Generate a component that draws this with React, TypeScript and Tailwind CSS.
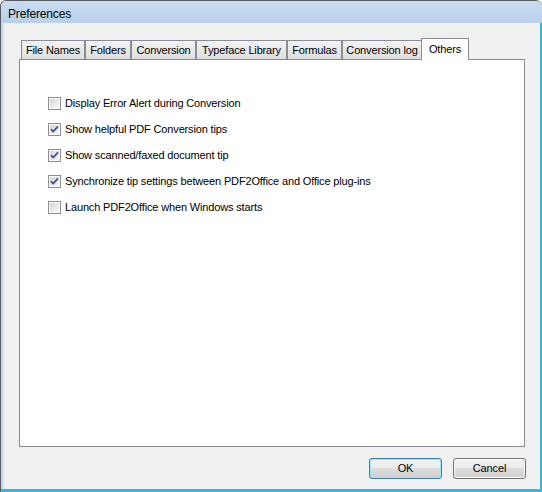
import React from "react";

const tabs = [
  { label: "File Names", w: "w-[64px]" },
  { label: "Folders", w: "w-[46px]" },
  { label: "Conversion", w: "w-[65px]" },
  { label: "Typeface Library", w: "w-[91px]" },
  { label: "Formulas", w: "w-[55px]" },
  { label: "Conversion log", w: "w-[80px]" },
];

const options = [
  { label: "Display Error Alert during Conversion", checked: false },
  { label: "Show helpful PDF Conversion tips", checked: true },
  { label: "Show scanned/faxed document tip", checked: true },
  { label: "Synchronize tip settings between PDF2Office and Office plug-ins", checked: true },
  { label: "Launch PDF2Office when Windows starts", checked: false },
];

function CheckBox({ checked }: { checked: boolean }) {
  return (
    <svg width="13" height="13" viewBox="0 0 13 13" className="shrink-0">
      <defs>
        <linearGradient id="cbfill" x1="0" y1="0" x2="1" y2="1">
          <stop offset="0" stopColor="#d6d6d6" />
          <stop offset="1" stopColor="#f8f8f8" />
        </linearGradient>
      </defs>
      <rect x="0.5" y="0.5" width="12" height="12" fill="#ffffff" stroke="#8e8f8f" />
      <rect x="2" y="2" width="9" height="9" fill="url(#cbfill)" />
      {checked && (
        <path
          d="M3 6.2 L5.2 8.6 L10 3.4"
          fill="none"
          stroke="#3d5aa0"
          strokeWidth="1.8"
          strokeLinejoin="round"
        />
      )}
    </svg>
  );
}

function Button({ label, focused }: { label: string; focused?: boolean }) {
  return (
    <div
      className={
        "flex h-[21px] w-[73px] items-center justify-center rounded-[3px] border bg-[linear-gradient(#f2f2f2_0%,#ebebeb_50%,#dddddd_50%,#cfcfcf_100%)] text-[11px] text-black " +
        (focused
          ? "border-[#3c7fb1] shadow-[inset_0_0_0_1px_#9fe3fa]"
          : "border-[#707070] shadow-[inset_0_0_0_1px_#fbfbfb]")
      }
    >
      {label}
    </div>
  );
}

export default function App() {
  return (
    <div
      className="flex h-[492px] w-[542px] flex-col overflow-hidden rounded-t-[6px] border-l border-t border-[#555a60] bg-[#c1d7ee] tracking-[-0.15px] text-black"
      style={{ fontFamily: '"Liberation Sans", Arial, sans-serif' }}
    >
      {/* Title bar */}
      <div className="flex h-[22px] shrink-0 items-center bg-gradient-to-b from-[#c9ddf1] to-[#b8d0ea] pl-[7px] pt-[3px] text-[12px]">
        Preferences
      </div>

      {/* Client area */}
      <div className="flex flex-1 border-b-[3px] border-r-[3px] border-b-[#3cb4dc] border-r-[#3cb4dc] pl-[2px]">
        <div className="flex flex-1 flex-col border-l border-[#dbe6f2] bg-[#f0f0f0] pl-[15px] pr-[14px] pt-[15px]">
          {/* Tabs */}
          <div className="flex h-[21px] items-end pl-[2px] text-[11px]">
            {tabs.map((t) => (
              <div
                key={t.label}
                className={
                  "flex h-[19px] items-center justify-center border border-b-0 border-[#898c95] bg-gradient-to-b from-[#f3f3f3] to-[#dedede] " +
                  t.w
                }
              >
                {t.label}
              </div>
            ))}
            <div className="relative z-10 -mb-px -ml-px flex h-[22px] w-[48px] items-start justify-center border border-b-0 border-[#898c95] bg-white pt-[2px]">
              Others
            </div>
          </div>

          {/* Panel */}
          <div className="flex h-[388px] w-[506px] flex-col gap-[13px] border border-[#898c95] bg-white pl-[28px] pt-[37px] text-[11px]">
            {options.map((o) => (
              <div key={o.label} className="flex h-[13px] items-center gap-[4px]">
                <CheckBox checked={o.checked} />
                <span>{o.label}</span>
              </div>
            ))}
          </div>

          {/* Buttons */}
          <div className="mt-[11px] flex w-[507px] justify-end gap-[11px]">
            <Button label="OK" focused />
            <Button label="Cancel" />
          </div>
        </div>
      </div>
    </div>
  );
}
